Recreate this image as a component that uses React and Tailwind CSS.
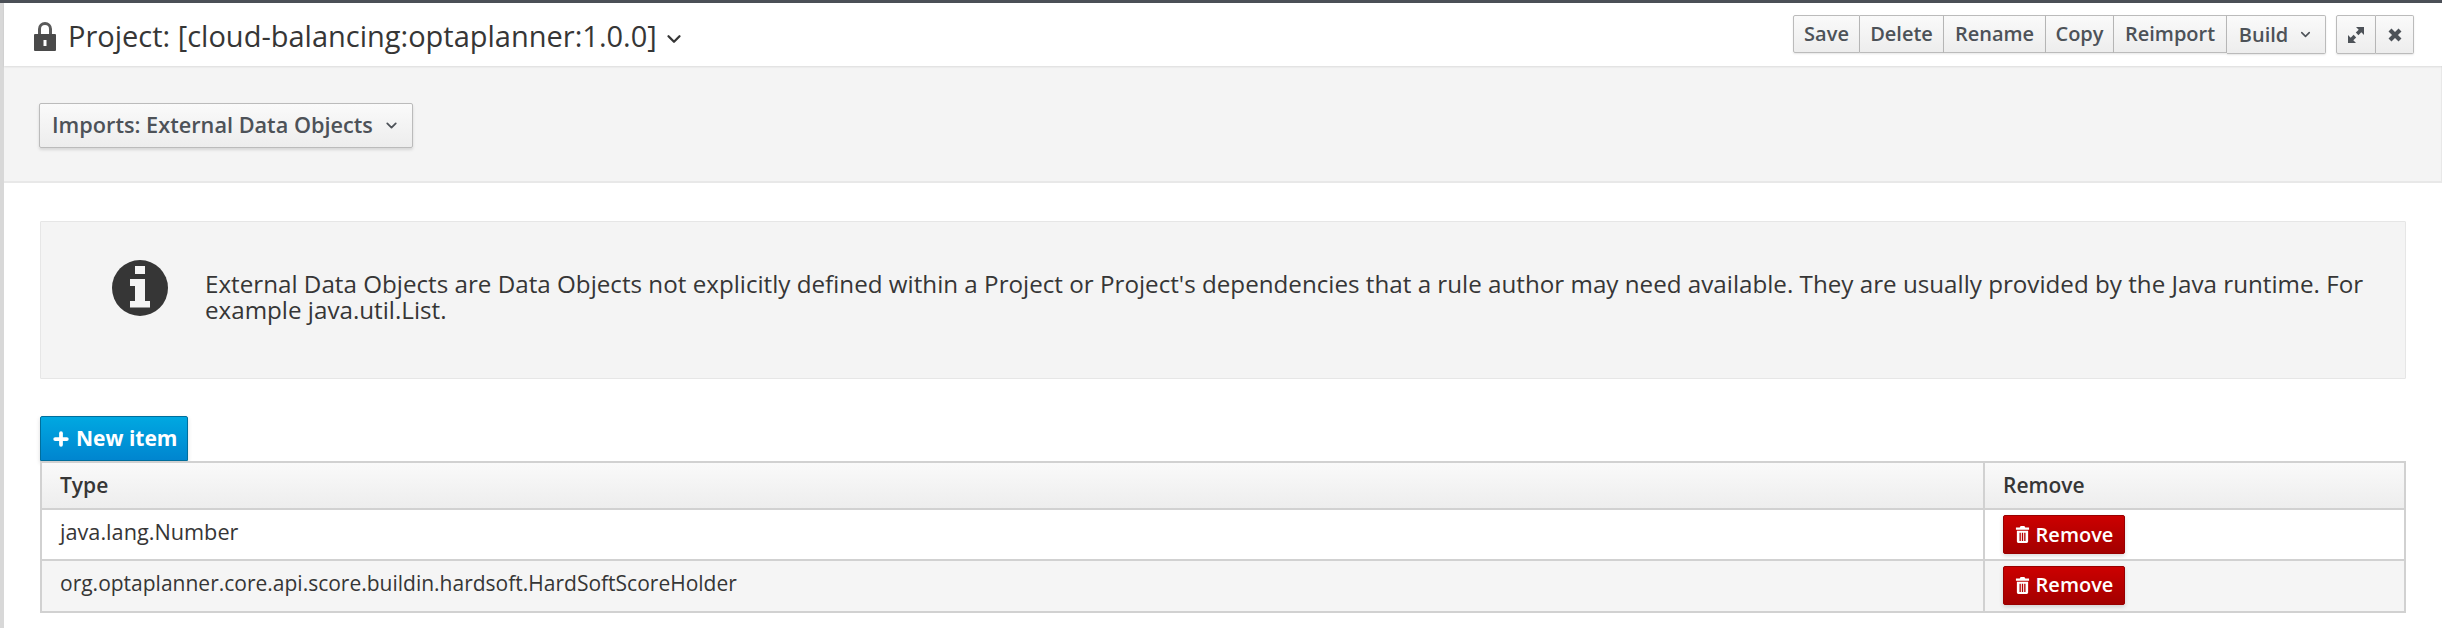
import { ChevronDown, Plus } from 'lucide-react'

const toolbar = [
  { label: 'Save', width: 'w-[67px]' },
  { label: 'Delete', width: 'w-[84px]' },
  { label: 'Rename', width: 'w-[102px]' },
  { label: 'Copy', width: 'w-[68px]' },
  { label: 'Reimport', width: 'w-[113px]' },
]

function LockIcon() {
  return (
    <svg viewBox="0 0 22 29" className="w-[22px] h-[29px] shrink-0">
      <path fill="#5a5a5a" d="M4 13V7a7 7 0 0 1 14 0v6h-3V7a4 4 0 0 0-8 0v6z" />
      <path fill="#4a4a4a" fillRule="evenodd" d="M1 12h20a1 1 0 0 1 1 1v15a1 1 0 0 1-1 1H1a1 1 0 0 1-1-1V13a1 1 0 0 1 1-1zM9.500 18v6h3v-6z" />
    </svg>
  )
}

function ExpandIcon() {
  return (
    <svg viewBox="0 0 18 18" className="w-[18px] h-[18px]" fill="#4d5258">
      <path d="M9 1h8v8l-2.700-2.700-2.900 2.900-2.600-2.600 2.900-2.900zM9 17H1V9l2.700 2.700 2.900-2.900 2.600 2.600-2.900 2.900z" />
    </svg>
  )
}

function CloseIcon() {
  return (
    <svg viewBox="0 0 14 14" className="w-[14px] h-[14px]" fill="none" stroke="#4d5258" strokeWidth="4.200">
      <path d="M2 2l10 10M12 2L2 12" />
    </svg>
  )
}

function InfoIcon() {
  return (
    <svg viewBox="0 0 56 56" className="w-14 h-14 shrink-0">
      <circle cx="28" cy="28" r="28" fill="#363636" />
      <path fill="#f4f4f4" d="M23 6h10v8H23zM18 19h15v22h5v6.500H18V41h5V26H18z" />
    </svg>
  )
}

function TrashIcon() {
  return (
    <svg viewBox="0 0 16 18" className="w-[15px] h-[17px] shrink-0" fill="#fff">
      <path fillRule="evenodd" d="M5 1.500 6 0h4l1 1.500h4V4H1V1.500zM2 5h12v11.500a1.500 1.500 0 0 1-1.500 1.500h-9A1.500 1.500 0 0 1 2 16.500zM4.800 7v9h1.400V7zm2.500 0v9h1.400V7zm2.500 0v9h1.400V7z" />
    </svg>
  )
}

function RemoveButton() {
  return (
    <button className="flex items-center justify-center gap-[6px] w-[122px] h-[39px] rounded-[2px] text-white text-[20px] font-semibold bg-gradient-to-b from-[#cc0000] to-[#a30000] border border-[#990000] shadow-[0_2px_4px_rgba(0,0,0,0.15)]">
      <TrashIcon />
      Remove
    </button>
  )
}

export default function App() {
  return (
    <div className="relative w-[2442px] h-[628px] bg-white overflow-hidden text-[#363636] font-['Open_Sans',sans-serif]">
      {/* top rule and left strip */}
      <div className="h-[3px] bg-[#4b5057]" />
      <div className="flex h-[625px]">
        <div className="w-1 bg-[#d8d8d8] shrink-0" />
        <div className="flex-1 min-w-0">

          {/* Header */}
          <header className="h-[63px] flex items-start justify-between pl-[30px] pr-7 shadow-[0_1px_2px_rgba(0,0,0,0.1)] relative">
            <div className="flex items-center h-[50px] mt-[8px]">
              <LockIcon />
              <span className="ml-3 text-[29px] text-[#363636]">Project: [cloud-balancing:optaplanner:1.0.0]</span>
              <ChevronDown className="ml-[6px] w-[22px] h-[22px] mt-[5px] text-[#363636]" strokeWidth={2.5} />
            </div>
            <div className="flex items-start gap-[10px] mt-3">
              <div className="flex text-[20px] font-semibold text-[#4d5258]">
                {toolbar.map((item, i) => (
                  <button
                    key={item.label}
                    className={`h-[38px] ${item.width} border border-[#bbb] bg-gradient-to-b from-[#fafafa] to-[#ededed] shadow-[0_1px_2px_rgba(0,0,0,0.1)] ${i === 0 ? 'rounded-l-[2px]' : 'border-l-0'}`}
                  >
                    {item.label}
                  </button>
                ))}
                <button className="flex items-center justify-center gap-[10px] h-[39px] w-[99px] border border-l-0 border-[#bbb] rounded-r-[2px] bg-gradient-to-b from-[#fafafa] to-[#ededed] shadow-[0_1px_2px_rgba(0,0,0,0.1)]">
                  Build
                  <ChevronDown className="w-[15px] h-[15px]" strokeWidth={2.5} />
                </button>
              </div>
              <div className="flex">
                <button className="flex items-center justify-center w-[40px] h-[39px] border border-[#bbb] rounded-l-[2px] bg-gradient-to-b from-[#fafafa] to-[#ededed] shadow-[0_1px_2px_rgba(0,0,0,0.1)]">
                  <ExpandIcon />
                </button>
                <button className="flex items-center justify-center w-[38px] h-[39px] border border-l-0 border-[#bbb] rounded-r-[2px] bg-gradient-to-b from-[#fafafa] to-[#ededed] shadow-[0_1px_2px_rgba(0,0,0,0.1)]">
                  <CloseIcon />
                </button>
              </div>
            </div>
          </header>

          {/* Sub toolbar */}
          <div className="h-[117px] bg-[#f4f4f4] border-b-2 border-[#e8e8e8] border-r pl-[35px] pt-[37px]">
            <button className="flex items-center gap-[10px] w-[374px] h-[45px] pl-3 border border-[#bbb] rounded-[2px] bg-gradient-to-b from-[#fafafa] to-[#ededed] shadow-[0_2px_3px_rgba(0,0,0,0.12)] text-[21.700px] font-semibold text-[#4d5258]">
              Imports: External Data Objects
              <ChevronDown className="w-[17px] h-[17px]" strokeWidth={2.5} />
            </button>
          </div>

          <div className="pl-9 pr-[36px]">
            {/* Info well */}
            <div className="mt-[38px] h-[158px] bg-[#f4f4f4] border border-[#e6e6e6] rounded-[1px] flex items-start pl-[71px] pr-8 pt-[38px]">
              <InfoIcon />
              <p className="ml-[37px] mt-[11px] w-[2185px] text-[24.200px] leading-[26px] text-[#363636]">
                External Data Objects are Data Objects not explicitly defined within a Project or Project's dependencies that a rule author may need available. They are usually provided by the Java runtime. For example java.util.List.
              </p>
            </div>

            {/* New item */}
            <button className="mt-[37px] flex items-center gap-[5px] pl-[10px] w-[148px] h-[45px] rounded-t-[2px] text-white text-[21px] font-bold bg-gradient-to-b from-[#00a8e1] to-[#0085cf] border border-[#006e9c] shadow-[0_2px_4px_rgba(0,0,0,0.15)]">
              <Plus className="w-5 h-5" strokeWidth={4.5} />
              New item
            </button>

            {/* Table */}
            <table className="w-[2366px] table-fixed border-collapse border-2 border-[#d1d1d1] text-[21px] text-[#363636]">
              <thead>
                <tr className="h-[47px] bg-gradient-to-b from-[#fafafa] to-[#ededed]">
                  <th className="w-[1943px] border-2 border-[#d1d1d1] pl-[18px] text-left font-semibold">Type</th>
                  <th className="border-2 border-[#d1d1d1] pl-[18px] text-left font-semibold">Remove</th>
                </tr>
              </thead>
              <tbody>
                <tr className="h-[51px]">
                  <td className="border-2 border-[#d1d1d1] pl-[18px] text-[21.700px] pb-1">java.lang.Number</td>
                  <td className="border-2 border-[#d1d1d1] pl-[18px]"><RemoveButton /></td>
                </tr>
                <tr className="h-[52px] bg-[#f5f5f5]">
                  <td className="border-2 border-[#d1d1d1] pl-[18px] pb-1">org.optaplanner.core.api.score.buildin.hardsoft.HardSoftScoreHolder</td>
                  <td className="border-2 border-[#d1d1d1] pl-[18px] pb-[2px]"><RemoveButton /></td>
                </tr>
              </tbody>
            </table>
          </div>
        </div>
      </div>
    </div>
  )
}
